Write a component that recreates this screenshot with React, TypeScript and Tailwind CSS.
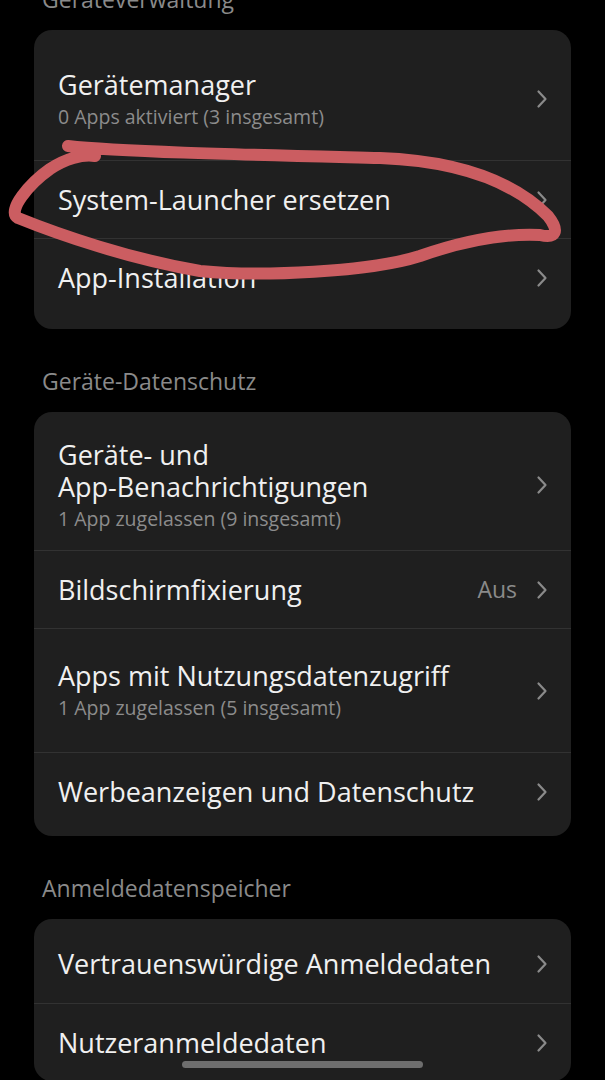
import type { ReactNode } from 'react'

type Row = {
  title: string[]
  sub?: string
  value?: string
  h: string
}

function Chevron() {
  return (
    <svg width="12" height="20" viewBox="0 0 12 20" className="shrink-0">
      <path d="M2.5 2.5 L9.5 10 L2.5 17.5" fill="none" stroke="#8a8a8a" strokeWidth="2.2" strokeLinecap="round" strokeLinejoin="round" />
    </svg>
  )
}

function SectionHeader({ children, className = '' }: { children: ReactNode; className?: string }) {
  return (
    <div className={`h-[83px] flex items-end pb-[17px] px-[42px] ${className}`}>
      <span className="text-[23px] leading-[28px] text-[#8a8a8a]">{children}</span>
    </div>
  )
}

function Card({ rows, className = '' }: { rows: Row[]; className?: string }) {
  return (
    <div className={`mx-[34px] rounded-[18px] bg-[#1f1f1f] ${className}`}>
      {rows.map((r, i) => (
        <div key={i} className={`flex items-center pl-[24px] pr-[23px] ${r.h} ${i > 0 ? 'border-t border-[#323232]' : ''}`}>
          <div className="flex-1 min-w-0">
            {r.title.map((t) => (
              <div key={t} className="text-[27px] leading-[32px] text-[#f0f0f0]">{t}</div>
            ))}
            {r.sub && <div className="mt-[3px] text-[19.5px] leading-[26px] text-[#8c8c8c]">{r.sub}</div>}
          </div>
          {r.value && <span className="mr-[19px] text-[23px] text-[#8a8a8a]">{r.value}</span>}
          <Chevron />
        </div>
      ))}
    </div>
  )
}

export default function App() {
  return (
    <div className="relative h-[1080px] overflow-hidden bg-black font-['Open_Sans',sans-serif]">
      <SectionHeader className="-mt-[53px]">Geräteverwaltung</SectionHeader>
      <Card
        className="pt-2 pb-[13px]"
        rows={[
          { title: ['Gerätemanager'], sub: '0 Apps aktiviert (3 insgesamt)', h: 'h-[122px]' },
          { title: ['System-Launcher ersetzen'], h: 'h-[78px]' },
          { title: ['App-Installation'], h: 'h-[78px]' },
        ]}
      />

      <SectionHeader>Geräte-Datenschutz</SectionHeader>
      <Card
        className="pt-2 pb-[6px]"
        rows={[
          { title: ['Geräte- und', 'App-Benachrichtigungen'], sub: '1 App zugelassen (9 insgesamt)', h: 'h-[130px]' },
          { title: ['Bildschirmfixierung'], value: 'Aus', h: 'h-[78px]' },
          { title: ['Apps mit Nutzungsdatenzugriff'], sub: '1 App zugelassen (5 insgesamt)', h: 'h-[124px]' },
          { title: ['Werbeanzeigen und Datenschutz'], h: 'h-[78px]' },
        ]}
      />

      <SectionHeader>Anmeldedatenspeicher</SectionHeader>
      <Card
        className="pt-[6px]"
        rows={[
          { title: ['Vertrauenswürdige Anmeldedaten'], h: 'h-[78px]' },
          { title: ['Nutzeranmeldedaten'], h: 'h-[78px]' },
        ]}
      />

      {/* hand-drawn marker around the launcher row */}
      <svg className="pointer-events-none absolute left-0 top-0" width="605" height="300" viewBox="0 0 605 300">
        <path
          d="M68 146 C 120 152, 260 155, 380 158 C 460 161, 515 183, 548 216 C 560 231, 556 239, 540 235 C 500 233, 460 242, 420 256 C 370 272, 260 277, 200 271 C 130 259, 60 235, 18 218 C 6 211, 30 183, 50 169 C 65 159, 82 154, 95 156"
          fill="none"
          stroke="#cb5d61"
          strokeWidth="12"
          strokeLinecap="round"
          strokeLinejoin="round"
        />
      </svg>

      <div className="absolute left-[182px] top-[1061px] h-[7px] w-[241px] rounded-full bg-[#6e6e6e]" />
    </div>
  )
}
